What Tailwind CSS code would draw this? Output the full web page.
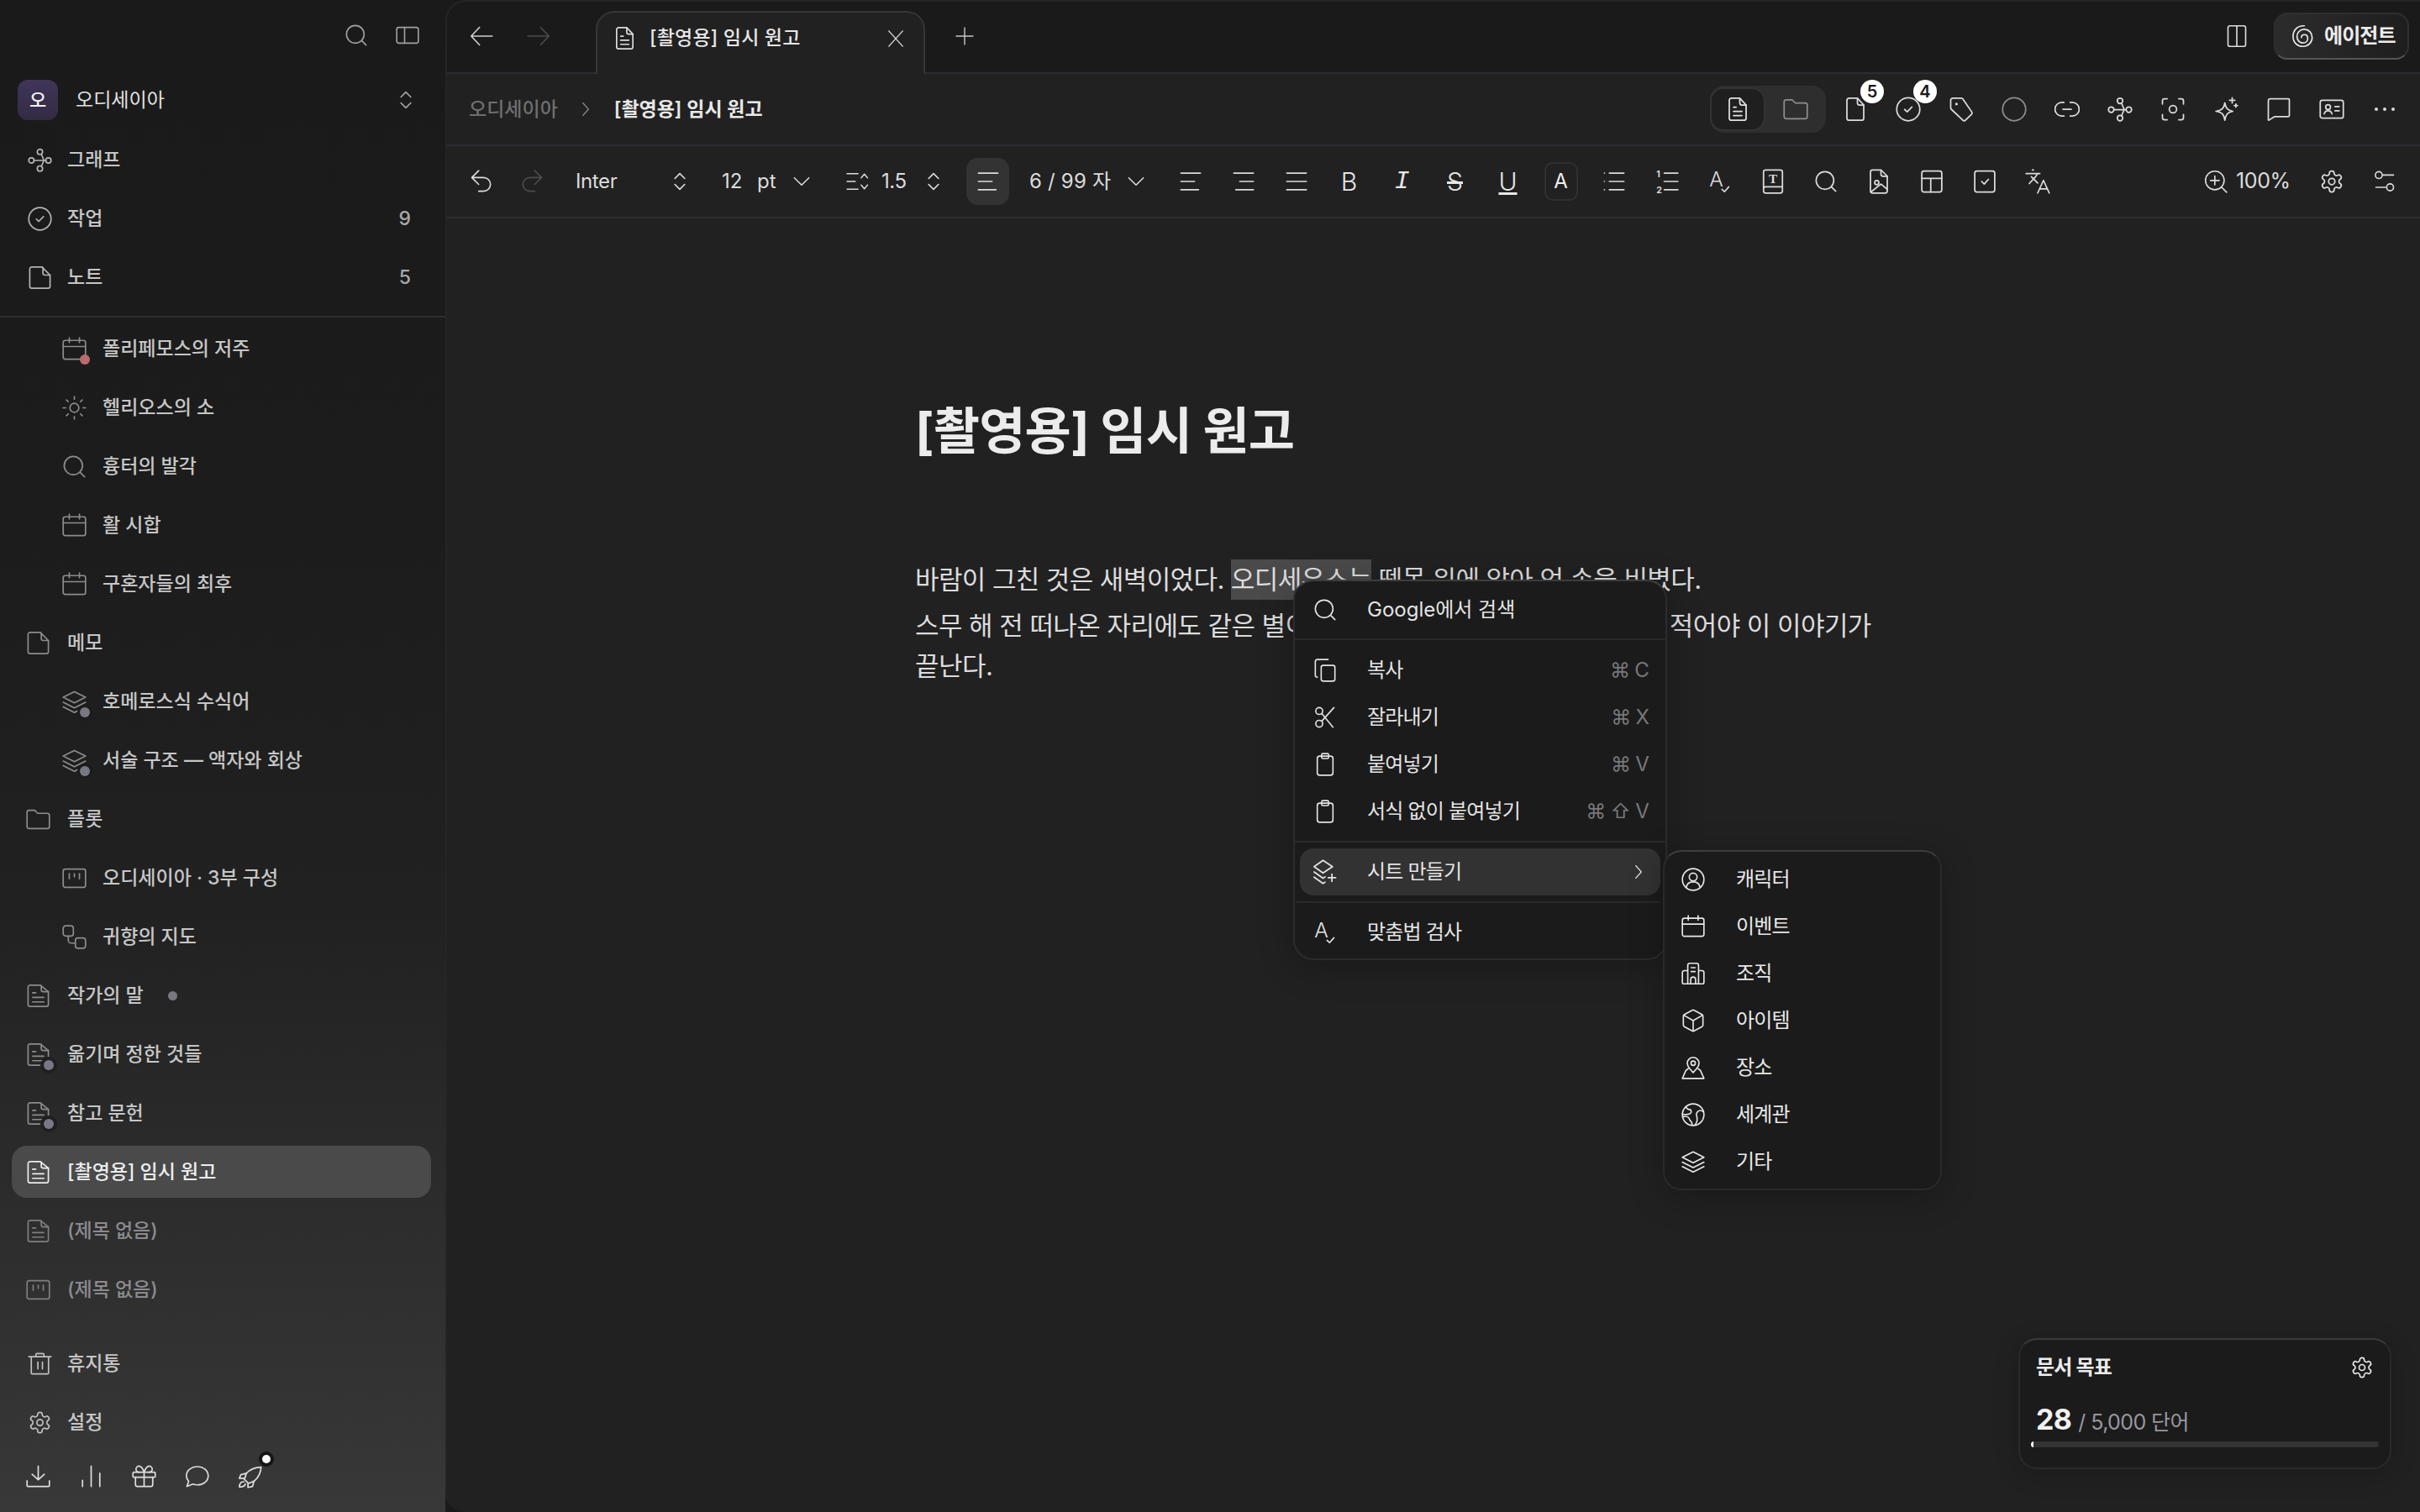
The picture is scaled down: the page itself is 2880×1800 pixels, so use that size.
<!DOCTYPE html>
<html lang="ko">
<head>
<meta charset="UTF-8">
<title>[촬영용] 임시 원고</title>
<script src="https://cdn.jsdelivr.net/npm/@tailwindcss/browser@4"></script>
</head>
<body class="bg-[#1a1a1a] font-['Inter','Noto_Sans_CJK_KR',sans-serif] [&_svg]:fill-none [&_svg]:stroke-current [&_svg]:stroke-[1.4] [&_svg]:shrink-0 [&_svg]:[stroke-linecap:round] [&_svg]:[stroke-linejoin:round]">
<!-- icon set -->
<svg class="hidden">
  <symbol id="search" viewBox="0 0 24 24"><circle cx="11" cy="11" r="9"/><path d="m22 22-4.500-4.500"/></symbol>
  <symbol id="panel" viewBox="0 0 24 24"><rect x="1" y="4" width="22" height="16" rx="2"/><path d="M9 4v16"/></symbol>
  <symbol id="updown" viewBox="0 0 24 24"><path d="m7 9 5-5 5 5M7 15l5 5 5-5"/></symbol>
  <symbol id="graph" viewBox="0 0 24 24"><circle cx="12" cy="4" r="2.600"/><circle cx="3.600" cy="12.400" r="2.600"/><circle cx="20.400" cy="12.400" r="2.600"/><circle cx="12" cy="20.400" r="2.600"/><path d="M6.200 12.400h11.600M13.400 6.200l2.600 6.200-2.600 5.800"/></symbol>
  <symbol id="check" viewBox="0 0 24 24"><circle cx="12" cy="12" r="11"/><path d="m8.500 12.200 2.400 2.300 4.600-4.600"/></symbol>
  <symbol id="file" viewBox="0 0 24 24"><path d="M14 1.500H4a2 2 0 0 0-2 2v17a2 2 0 0 0 2 2h16a2 2 0 0 0 2-2V9.500z"/><path d="M15 2v5.500a2 2 0 0 0 2 2h5"/></symbol>
  <symbol id="filetext" viewBox="0 0 24 24"><path d="M14 1.500H4a2 2 0 0 0-2 2v17a2 2 0 0 0 2 2h16a2 2 0 0 0 2-2V8z"/><path d="M15 2v4a2 2 0 0 0 2 2h5M6.500 9h3M6.500 13.500h11M6.500 18h11"/></symbol>
  <symbol id="doc" viewBox="0 0 24 24"><path d="M14 1.500H6a2 2 0 0 0-2 2v17a2 2 0 0 0 2 2h12a2 2 0 0 0 2-2V8z"/><path d="M14 2v4a2 2 0 0 0 2 2h4M8 10h2.500M8 14h8M8 18h8"/></symbol>
  <symbol id="blank" viewBox="0 0 24 24"><path d="M14 1.500H6a2 2 0 0 0-2 2v17a2 2 0 0 0 2 2h12a2 2 0 0 0 2-2V8z"/><path d="M14 2v4a2 2 0 0 0 2 2h4"/></symbol>
  <symbol id="calendar" viewBox="0 0 24 24"><rect x="1" y="3.500" width="22" height="18.500" rx="2"/><path d="M1 9.500h22M7 1v4.500M17 1v4.500"/></symbol>
  <symbol id="sun" viewBox="0 0 24 24"><circle cx="12" cy="12" r="4.400"/><path d="M12 1v2.500M12 20.500V23M1 12h2.500M20.500 12H23M4.200 4.200 6 6M18 18l1.800 1.800M4.200 19.800 6 18M18 6l1.800-1.800"/></symbol>
  <symbol id="folder" viewBox="0 0 24 24"><path d="M1 5a2 2 0 0 1 2-2h5.500l3 3H21a2 2 0 0 1 2 2v11a2 2 0 0 1-2 2H3a2 2 0 0 1-2-2z"/></symbol>
  <symbol id="layers" viewBox="0 0 24 24"><path d="m12 2 11 5.500L12 13 1 7.500zM1 12.500 12 18l11-5.500M1 17l11 5.500L23 17"/></symbol>
  <symbol id="kanban" viewBox="0 0 24 24"><rect x="1" y="3" width="22" height="18" rx="2"/><path d="M7 7.500v5M12 7.500v3M17 7.500v5"/></symbol>
  <symbol id="flow" viewBox="0 0 24 24"><rect x="1" y="1" width="10" height="10" rx="2.500"/><rect x="13" y="13" width="10" height="10" rx="2.500"/><path d="M6 11v4a3 3 0 0 0 3 3h4"/></symbol>
  <symbol id="trash" viewBox="0 0 24 24"><path d="M1 5h22M8 5V3a1 1 0 0 1 1-1h6a1 1 0 0 1 1 1v2M3.500 5v16a1 1 0 0 0 1 1h15a1 1 0 0 0 1-1V5M10 10.500v6.500M14.500 10.500v6.500"/></symbol>
  <symbol id="gear" viewBox="0 0 24 24"><path d="M12.220 2h-.44a2 2 0 0 0-2 2v.18a2 2 0 0 1-1 1.730l-.43.25a2 2 0 0 1-2 0l-.15-.08a2 2 0 0 0-2.730.73l-.22.38a2 2 0 0 0 .73 2.730l.15.1a2 2 0 0 1 1 1.720v.51a2 2 0 0 1-1 1.740l-.15.09a2 2 0 0 0-.73 2.730l.22.38a2 2 0 0 0 2.730.73l.15-.08a2 2 0 0 1 2 0l.43.25a2 2 0 0 1 1 1.730V20a2 2 0 0 0 2 2h.44a2 2 0 0 0 2-2v-.18a2 2 0 0 1 1-1.730l.43-.25a2 2 0 0 1 2 0l.15.08a2 2 0 0 0 2.730-.73l.22-.39a2 2 0 0 0-.73-2.730l-.15-.08a2 2 0 0 1-1-1.740v-.5a2 2 0 0 1 1-1.740l.15-.09a2 2 0 0 0 .73-2.730l-.22-.38a2 2 0 0 0-2.730-.73l-.15.08a2 2 0 0 1-2 0l-.43-.25a2 2 0 0 1-1-1.730V4a2 2 0 0 0-2-2z"/><circle cx="12" cy="12" r="3"/></symbol>
  <symbol id="download" viewBox="0 0 24 24"><path d="M12 2v13M6 10l6 5.500 6-5.500M1 16.500V21a1 1 0 0 0 1 1h20a1 1 0 0 0 1-1v-4.500"/></symbol>
  <symbol id="bars" viewBox="0 0 24 24"><path d="M3.500 22v-6M12 22V2M20.500 22V9"/></symbol>
  <symbol id="gift" viewBox="0 0 24 24"><rect x="1" y="8" width="22" height="5" rx="1"/><path d="M12 8v14M3.500 13v7a2 2 0 0 0 2 2h13a2 2 0 0 0 2-2v-7M7 8a3 3 0 0 1 0-6c3 0 5 6 5 6s2-6 5-6a3 3 0 0 1 0 6"/></symbol>
  <symbol id="chat" viewBox="0 0 24 24"><path d="M23 11.500c0 5-4.700 9-10.500 9a12 12 0 0 1-4.500-.9L2 22l1.800-5A8.500 8.500 0 0 1 1.500 11.500c0-5 4.800-9 10.800-9S23 6.500 23 11.500z"/></symbol>
  <symbol id="rocket" viewBox="0 0 24 24"><path d="M23 3c-6 .2-11 2.200-14.500 6L6.500 15l4 4 6-2.500C20.500 13 22.500 8.500 23 3zM8.500 9 3 10.500 1.500 14h5M16 16.500 14.500 22 10 23v-4.500M6 17.500c-2-.5-4 .5-4.500 5 3.500.2 5.500-1 6-3"/></symbol>
  <symbol id="left" viewBox="0 0 24 24"><path d="M23 12H2M10 3l-8.500 9 8.500 9"/></symbol>
  <symbol id="right" viewBox="0 0 24 24"><path d="M1 12h21M14 3l8.500 9-8.500 9"/></symbol>
  <symbol id="x" viewBox="0 0 24 24"><path d="M3 2l18 20M21 2 3 22"/></symbol>
  <symbol id="plus" viewBox="0 0 24 24"><path d="M12 2v20M2 12h20"/></symbol>
  <symbol id="chevr" viewBox="0 0 24 24"><path d="m8 3 8 9-8 9"/></symbol>
  <symbol id="chevd" viewBox="0 0 24 24"><path d="m4 8 8 8 8-8"/></symbol>
  <symbol id="split" viewBox="0 0 24 24"><rect x="3" y="1.500" width="18" height="21" rx="2"/><path d="M12 1.500v21"/></symbol>
  <symbol id="spiral" viewBox="0 0 24 24"><path d="M14 1.500C7 1 2.500 6 2.500 12.500c0 6 4.500 10 10 10 5.500 0 9.500-4 9.500-9 0-5-3.500-8.500-8-8.500s-7.500 3.500-7.500 7.500c0 4 3 6.500 6 6.500s5-2 5-4.500-1.500-4-3.500-4-3 1.500-3 3"/></symbol>
  <symbol id="tag" viewBox="0 0 24 24"><path d="M4 1.500h8a2 2 0 0 1 1.500.7l8.500 12.300a2 2 0 0 1 0 2.200L16 22.500a1.500 1.500 0 0 1-2.400 0L2.500 12a2 2 0 0 1-.5-1.300V3.500a2 2 0 0 1 2-2z"/><circle cx="7.500" cy="7" r=".6"/></symbol>
  <symbol id="circle" viewBox="0 0 24 24"><circle cx="12" cy="12" r="11"/></symbol>
  <symbol id="link" viewBox="0 0 24 24"><path d="M9 5.500H7a6.500 6.500 0 0 0 0 13h2M15 5.500h2a6.500 6.500 0 0 1 0 13h-2M8 12h8"/></symbol>
  <symbol id="focus" viewBox="0 0 24 24"><path d="M2 7V4a2 2 0 0 1 2-2h2.500M17.500 2H20a2 2 0 0 1 2 2v3M22 17v3a2 2 0 0 1-2 2h-2.500M6.500 22H4a2 2 0 0 1-2-2v-3"/><circle cx="12" cy="12" r="3.500"/></symbol>
  <symbol id="sparkle" viewBox="0 0 24 24"><path d="M11 6c.8 5 2.500 7 7.500 8-5 1-6.700 3-7.500 8.500C10.200 17 8.500 15 2.500 14 8.500 13 10.200 11 11 6zM18 1v5M15.500 3.500h5M21.500 7v3M20 8.500h3"/></symbol>
  <symbol id="comment" viewBox="0 0 24 24"><path d="M4 2h17a1 1 0 0 1 1 1v15a1 1 0 0 1-1 1H8l-5.500 3.500a.4.4 0 0 1-.5-.4V4a2 2 0 0 1 2-2z"/></symbol>
  <symbol id="idcard" viewBox="0 0 24 24"><rect x="1" y="3.500" width="22" height="17" rx="2"/><circle cx="8.500" cy="10" r="2.300"/><path d="M4.800 16.500c.5-2 2-3 3.700-3s3.200 1 3.700 3M15 9.500h4M15 13.500h4"/></symbol>
  <symbol id="undo" viewBox="0 0 24 24"><path d="M10 15 3 8l7-7M3 8h12a6.500 6.500 0 0 1 0 14h-5"/></symbol>
  <symbol id="redo" viewBox="0 0 24 24"><path d="m14 15 7-7-7-7M21 8H9a6.500 6.500 0 0 0 0 14h5"/></symbol>
  <symbol id="linegap" viewBox="0 0 24 24"><path d="M1 3.500h12M1 12h9M1 20.500h12M16.500 8l3.500-4 3.500 4M16.500 16l3.500 4 3.500-4"/></symbol>
  <symbol id="alignl" viewBox="0 0 24 24"><path d="M2 3.500h20M2 12h14M2 20.500h18"/></symbol>
  <symbol id="alignr" viewBox="0 0 24 24"><path d="M2 3.500h20M8 12h14M4 20.500h18"/></symbol>
  <symbol id="alignj" viewBox="0 0 24 24"><path d="M2 3.500h20M2 12h20M2 20.500h20"/></symbol>
  <symbol id="list" viewBox="0 0 24 24"><path d="M7 3.500h15M7 12h15M7 20.500h15M2 3.500h.1M2 12h.1M2 20.500h.1"/></symbol>
  <symbol id="olist" viewBox="0 0 24 24"><path d="M9 3.500h14M9 12h14M9 20.500h14"/><text x="1" y="8" font-size="9" fill="currentColor" stroke="none" font-weight="700">1</text><text x="1" y="24" font-size="9" fill="currentColor" stroke="none" font-weight="700">2</text></symbol>
  <symbol id="spell" viewBox="0 0 24 24"><text x="1" y="17.500" font-size="21" fill="currentColor" stroke="none" font-weight="300">A</text><path d="m14 20 2.500 2.500 4.500-5"/></symbol>
  <symbol id="book" viewBox="0 0 24 24"><path d="M5 1h14a2 2 0 0 1 2 2v18a2 2 0 0 1-2 2H5a2 2 0 0 1-2-2V3a2 2 0 0 1 2-2zM3 19a2 2 0 0 1 2-2h16"/><text x="12" y="13.500" text-anchor="middle" font-size="12" fill="currentColor" stroke="none" font-weight="700" font-family="Liberation Serif">T</text></symbol>
  <symbol id="fileimg" viewBox="0 0 24 24"><path d="M14 1H6a2 2 0 0 0-2 2v18a2 2 0 0 0 2 2h12a2 2 0 0 0 2-2V7z"/><path d="M14 1.500V5a2 2 0 0 0 2 2h4"/><circle cx="10" cy="13" r="2"/><path d="m4.500 22 9.500-7.500 6 5"/></symbol>
  <symbol id="table" viewBox="0 0 24 24"><rect x="2.500" y="2" width="19" height="20" rx="2"/><path d="M2.500 9h19M11 9v13"/></symbol>
  <symbol id="checkbox" viewBox="0 0 24 24"><rect x="2.500" y="2" width="19" height="20" rx="2"/><path d="m9 12 2.500 2.500 4-4.500"/></symbol>
  <symbol id="translate" viewBox="0 0 24 24"><path d="m6 7.500 6 6M4 14l6-6.500 2-3M1 4.500h13M7 1h1M23 23 17.500 11 12 23M13.800 19h7.500"/></symbol>
  <symbol id="zoomin" viewBox="0 0 24 24"><circle cx="11" cy="11" r="9.500"/><path d="m23 23-5-5M11 6.500v9M6.500 11h9"/></symbol>
  <symbol id="sliders" viewBox="0 0 24 24"><circle cx="6" cy="5.500" r="3.500"/><path d="M10 5.500h11M3 18h10"/><circle cx="17.500" cy="18" r="3.500"/></symbol>
  <symbol id="copy" viewBox="0 0 24 24"><rect x="8" y="7" width="14" height="16" rx="2"/><path d="M4 19a2 2 0 0 1-2-2V3a2 2 0 0 1 2-2h11"/></symbol>
  <symbol id="scissors" viewBox="0 0 24 24"><circle cx="6" cy="5.500" r="3.500"/><circle cx="6" cy="18.500" r="3.500"/><path d="M8.500 8 20 22M21 2 8.500 16"/></symbol>
  <symbol id="clipboard" viewBox="0 0 24 24"><rect x="4" y="3.500" width="16" height="19.500" rx="2.500"/><rect x="8.500" y="1" width="7" height="5" rx="1"/></symbol>
  <symbol id="sheetadd" viewBox="0 0 24 24"><path d="m10 1 9 6-9 6-8.500-6zM1.500 12l8.500 6 2-1.300M1.500 17l8.500 6 2-1.300M18.500 14v7M15 17.500h7"/></symbol>
  <symbol id="user" viewBox="0 0 24 24"><circle cx="12" cy="12" r="11"/><circle cx="12" cy="9.500" r="4"/><path d="M5 20c.5-3 3-5.500 7-5.500s6.500 2.500 7 5.500"/></symbol>
  <symbol id="building" viewBox="0 0 24 24"><path d="M6.500 22.500V3.500a2 2 0 0 1 2-2h7a2 2 0 0 1 2 2v19M6.500 9H3a2 2 0 0 0-2 2v10a1.500 1.500 0 0 0 1.500 1.500h19A1.500 1.500 0 0 0 23 21V11a2 2 0 0 0-2-2h-3.500M10 6h4M10 10h4M9.500 22.500V18a2.500 2.500 0 0 1 5 0v4.500"/></symbol>
  <symbol id="box" viewBox="0 0 24 24"><path d="M22 7.500a2 2 0 0 0-1-1.700L13 1.500a2 2 0 0 0-2 0L3 5.800a2 2 0 0 0-1 1.700v9a2 2 0 0 0 1 1.700l8 4.300a2 2 0 0 0 2 0l8-4.300a2 2 0 0 0 1-1.700zM2.500 6.500 12 12l9.500-5.500M12 23V12"/></symbol>
  <symbol id="place" viewBox="0 0 24 24"><path d="M12 17c-3-3-6-6-6-9.500a6 6 0 0 1 12 0C18 11 15 14 12 17z"/><circle cx="12" cy="7.500" r="2.200"/><path d="M7 13 4.500 15 1 23h22l-3.500-8L17 13"/></symbol>
  <symbol id="globe" viewBox="0 0 24 24"><circle cx="12" cy="12" r="11"/><path d="M4.500 4c1 2 3 3 5 3 1 2 .5 4-2 4.500-2 .5-4 .2-6.500 0M22.500 9c-2-1.500-4.500-1.500-6 0-1 1.500-2 2-1 4 .5 1.500 1 3 .5 5 0 1.500-1 3-2 4.500M1.800 14c2-.5 4-.5 5.500 1 1 1 .8 3 2.700 4 .8 1 1 2 1 3.500"/></symbol>
</svg>

<div class="relative flex w-[2880px] h-[1800px] overflow-hidden">
  <!-- sidebar -->
  <aside class="w-[530px] h-full shrink-0 flex flex-col bg-[linear-gradient(180deg,#1a1a1a_0%,#1c1c1c_35%,#212121_60%,#383838_100%)] text-[23px] font-medium text-[#c6c6c6]">
    <div class="flex items-center justify-end h-[84px] gap-[33px] pr-[31px] text-[#a0a0a0]">
      <svg viewBox="0 0 24 24" class="size-[28px]"><use href="#search"/></svg>
      <svg viewBox="0 0 24 24" class="size-[28px]"><use href="#panel"/></svg>
    </div>
    <div class="flex items-center h-[70px] pl-[21px] pr-[33px]">
      <span class="flex items-center justify-center size-[48px] rounded-[12px] bg-[linear-gradient(180deg,#403558,#322b44)] text-[22px] text-[#f0f0f0]">오</span>
      <span class="ml-[21px] font-normal text-[#e2e2e2]">오디세이아</span>
      <svg viewBox="0 0 24 24" class="ml-auto size-[28px] text-[#a8a8a8]"><use href="#updown"/></svg>
    </div>
    <nav class="mt-[5px] h-[210px] pl-[14px] pr-[17px]">
      <a class="flex items-center h-[62px] mb-2 pl-[19px] gap-[18px]"><svg viewBox="0 0 24 24" class="size-[29px] text-[#b5b5b5]"><use href="#graph"/></svg>그래프</a>
      <a class="flex items-center h-[62px] mb-2 pl-[19px] gap-[18px]"><svg viewBox="0 0 24 24" class="size-[29px] text-[#b5b5b5]"><use href="#check"/></svg>작업<span class="ml-auto mr-[24px] text-[#a8a8a8]">9</span></a>
      <a class="flex items-center h-[62px] mb-2 pl-[19px] gap-[18px]"><svg viewBox="0 0 24 24" class="size-[29px] text-[#b5b5b5]"><use href="#file"/></svg>노트<span class="ml-auto mr-[24px] text-[#a8a8a8]">5</span></a>
    </nav>
    <div class="mt-[7px] border-t-2 border-[#2e2e2e] pt-[6px] pl-[14px] pr-[17px] h-[1216px]">
      <a class="flex items-center h-[62px] mb-2 pl-[60px] gap-[19px]"><span class="relative size-[29px]"><svg viewBox="0 0 24 24" class="size-[29px] text-[#8c8c8c]"><use href="#calendar"/></svg><i class="absolute -right-[4px] -bottom-[4px] size-[12px] rounded-full bg-[#bd6a6f]"></i></span>폴리페모스의 저주</a>
      <a class="flex items-center h-[62px] mb-2 pl-[60px] gap-[19px]"><svg viewBox="0 0 24 24" class="size-[29px] text-[#8c8c8c]"><use href="#sun"/></svg>헬리오스의 소</a>
      <a class="flex items-center h-[62px] mb-2 pl-[60px] gap-[19px]"><svg viewBox="0 0 24 24" class="size-[29px] text-[#8c8c8c]"><use href="#search"/></svg>흉터의 발각</a>
      <a class="flex items-center h-[62px] mb-2 pl-[60px] gap-[19px]"><svg viewBox="0 0 24 24" class="size-[29px] text-[#8c8c8c]"><use href="#calendar"/></svg>활 시합</a>
      <a class="flex items-center h-[62px] mb-2 pl-[60px] gap-[19px]"><svg viewBox="0 0 24 24" class="size-[29px] text-[#8c8c8c]"><use href="#calendar"/></svg>구혼자들의 최후</a>
      <a class="flex items-center h-[62px] mb-2 pl-[17px] gap-[20px]"><svg viewBox="0 0 24 24" class="size-[29px] text-[#8c8c8c]"><use href="#file"/></svg>메모</a>
      <a class="flex items-center h-[62px] mb-2 pl-[60px] gap-[19px]"><span class="relative size-[29px]"><svg viewBox="0 0 24 24" class="size-[29px] text-[#8c8c8c]"><use href="#layers"/></svg><i class="absolute -right-[4px] -bottom-[4px] size-[12px] rounded-full bg-[#777883] ring-[3px] ring-[#1c1c1c]"></i></span>호메로스식 수식어</a>
      <a class="flex items-center h-[62px] mb-2 pl-[60px] gap-[19px]"><span class="relative size-[29px]"><svg viewBox="0 0 24 24" class="size-[29px] text-[#8c8c8c]"><use href="#layers"/></svg><i class="absolute -right-[4px] -bottom-[4px] size-[12px] rounded-full bg-[#777883] ring-[3px] ring-[#1c1c1c]"></i></span>서술 구조 — 액자와 회상</a>
      <a class="flex items-center h-[62px] mb-2 pl-[17px] gap-[20px]"><svg viewBox="0 0 24 24" class="size-[29px] text-[#8c8c8c]"><use href="#folder"/></svg>플롯</a>
      <a class="flex items-center h-[62px] mb-2 pl-[60px] gap-[19px]"><svg viewBox="0 0 24 24" class="size-[29px] text-[#8c8c8c]"><use href="#kanban"/></svg>오디세이아 · 3부 구성</a>
      <a class="flex items-center h-[62px] mb-2 pl-[60px] gap-[19px]"><svg viewBox="0 0 24 24" class="size-[29px] text-[#8c8c8c]"><use href="#flow"/></svg>귀향의 지도</a>
      <a class="flex items-center h-[62px] mb-2 pl-[17px] gap-[20px]"><svg viewBox="0 0 24 24" class="size-[29px] text-[#8c8c8c]"><use href="#filetext"/></svg>작가의 말<i class="ml-[9px] size-[11px] rounded-full bg-[#777883]"></i></a>
      <a class="flex items-center h-[62px] mb-2 pl-[17px] gap-[20px]"><span class="relative size-[29px]"><svg viewBox="0 0 24 24" class="size-[29px] text-[#8c8c8c]"><use href="#filetext"/></svg><i class="absolute -right-[4px] -bottom-[4px] size-[12px] rounded-full bg-[#777883] ring-[4px] ring-[#1f1f1f]"></i></span>옮기며 정한 것들</a>
      <a class="flex items-center h-[62px] mb-2 pl-[17px] gap-[20px]"><span class="relative size-[29px]"><svg viewBox="0 0 24 24" class="size-[29px] text-[#8c8c8c]"><use href="#filetext"/></svg><i class="absolute -right-[4px] -bottom-[4px] size-[12px] rounded-full bg-[#777883] ring-[4px] ring-[#1f1f1f]"></i></span>참고 문헌</a>
      <a class="flex items-center h-[62px] mb-2 pl-[17px] gap-[20px] rounded-[18px] bg-[#4a4a4a] text-[#ededed]"><svg viewBox="0 0 24 24" class="size-[29px] text-[#ededed]"><use href="#filetext"/></svg>[촬영용] 임시 원고</a>
      <a class="flex items-center h-[62px] mb-2 pl-[17px] gap-[20px] text-[#8b8b8f]"><svg viewBox="0 0 24 24" class="size-[29px] text-[#7f7f7f]"><use href="#filetext"/></svg>(제목 없음)</a>
      <a class="flex items-center h-[62px] mb-2 pl-[17px] gap-[20px] text-[#8b8b8f]"><svg viewBox="0 0 24 24" class="size-[29px] text-[#7f7f7f]"><use href="#kanban"/></svg>(제목 없음)</a>
    </div>
    <div class="pl-[14px] pr-[17px]">
      <a class="flex items-center h-[62px] mb-2 pl-[19px] gap-[18px]"><svg viewBox="0 0 24 24" class="size-[29px] text-[#c0c0c0]"><use href="#trash"/></svg>휴지통</a>
      <a class="flex items-center h-[62px] mb-2 pl-[19px] gap-[18px]"><svg viewBox="0 0 24 24" class="size-[29px] text-[#c0c0c0]"><use href="#gear"/></svg>설정</a>
      <div class="flex items-center gap-[34px] pl-[17px] pt-[11px] text-[#dedede]">
        <svg viewBox="0 0 24 24" class="size-[29px]"><use href="#download"/></svg>
        <svg viewBox="0 0 24 24" class="size-[29px]"><use href="#bars"/></svg>
        <svg viewBox="0 0 24 24" class="size-[29px]"><use href="#gift"/></svg>
        <svg viewBox="0 0 24 24" class="size-[29px]"><use href="#chat"/></svg>
        <span class="relative size-[29px]"><svg viewBox="0 0 24 24" class="size-[29px]"><use href="#rocket"/></svg><i class="absolute -right-[10px] -top-[11px] size-[10px] rounded-full bg-white ring-[4px] ring-[#161616]"></i></span>
      </div>
    </div>
  </aside>

  <!-- main -->
  <main class="flex-1 flex flex-col min-w-0 bg-[#212121] rounded-l-[24px] border-l-2 border-t-2 border-[#252525] overflow-hidden text-[#d9d9d9]">
    <!-- tab bar -->
    <div class="relative flex items-center h-[86px] pb-[3px] shrink-0 bg-[#1a1a1a] border-b-2 border-[#2d2d32] pl-[8px] pr-[13px]">
      <span class="flex justify-center w-[66px] text-[#d0d0d0]"><svg viewBox="0 0 24 24" class="size-[28px]"><use href="#left"/></svg></span>
      <span class="flex justify-center ml-[4px] w-[62px] text-[#4c4c4c]"><svg viewBox="0 0 24 24" class="size-[28px]"><use href="#right"/></svg></span>
      <div class="relative self-end flex items-center h-[75px] w-[392px] ml-[37px] -mb-[5px] pl-[18px] pr-[22px] pb-[12px] bg-[#212121] rounded-t-[22px] border-t-2 border-x-2 border-[#36363a] border-b-0 text-[23px] font-medium tracking-[0.2px] text-[#e6e6e6]">
        <svg viewBox="0 0 24 24" class="size-[29px] text-[#dcdcdc]"><use href="#doc"/></svg>
        <span class="ml-[15px]">[촬영용] 임시 원고</span>
        <svg viewBox="0 0 24 24" class="ml-auto size-[22px] text-[#e0e0e0]"><use href="#x"/></svg>
      </div>
      <span class="flex justify-center w-[42px] ml-[26px] text-[#c8c8c8]"><svg viewBox="0 0 24 24" class="size-[24px]"><use href="#plus"/></svg></span>
      <svg viewBox="0 0 24 24" class="ml-auto size-[28px] text-[#dcdcdc]"><use href="#split"/></svg>
      <div class="flex items-center gap-[12px] ml-[30px] w-[161px] h-[56px] pl-[18px] rounded-[16px] border-2 border-[#2f2f2f] border-b-[#555] bg-[linear-gradient(90deg,#2c2c2c,#1e1e1e)] text-[24px] font-bold tracking-[-0.9px] text-[#ececec]">
        <svg viewBox="0 0 24 24" class="size-[28px]"><use href="#spiral"/></svg>에이전트
      </div>
    </div>
    <!-- breadcrumb + note tools -->
    <div class="flex items-center h-[86px] shrink-0 border-b-2 border-[#2d2d32] pl-[26px] pr-[11px] text-[23px]">
      <span class="text-[#6f6f6f] font-medium">오디세이아</span>
      <svg viewBox="0 0 24 24" class="ml-[23px] mr-[24px] size-[20px] text-[#8a8a8a]"><use href="#chevr"/></svg>
      <span class="font-semibold text-[#e8e8e8]">[촬영용] 임시 원고</span>
      <div class="ml-auto flex items-center w-[138px] h-[56px] rounded-[16px] bg-[#2e2e2e]">
        <span class="flex items-center justify-center w-[66px] h-[52px] rounded-[16px] bg-[#1f1f1f] border-2 border-[#333] text-[#e2e2e2]"><svg viewBox="0 0 24 24" class="size-[30px]"><use href="#doc"/></svg></span>
        <span class="flex justify-center flex-1 text-[#8e8e8e]"><svg viewBox="0 0 24 24" class="size-[30px]"><use href="#folder"/></svg></span>
      </div>
      <div class="flex items-center text-[#dcdcdc] ml-[3px]">
        <span class="relative flex justify-center w-[63px]"><svg viewBox="0 0 24 24" class="size-[30px]"><use href="#blank"/></svg><b class="absolute left-[38px] -top-[20px] flex items-center justify-center size-[28px] rounded-full bg-white text-[#1a1a1a] text-[20px] font-semibold">5</b></span>
        <span class="relative flex justify-center w-[63px]"><svg viewBox="0 0 24 24" class="size-[30px]"><use href="#check"/></svg><b class="absolute left-[38px] -top-[20px] flex items-center justify-center size-[28px] rounded-full bg-white text-[#1a1a1a] text-[20px] font-semibold">4</b></span>
        <span class="flex justify-center w-[63px]"><svg viewBox="0 0 24 24" class="size-[30px]"><use href="#tag"/></svg></span>
        <span class="flex justify-center w-[63px] text-[#8f8f8f]"><svg viewBox="0 0 24 24" class="size-[30px]"><use href="#circle"/></svg></span>
        <span class="flex justify-center w-[63px]"><svg viewBox="0 0 24 24" class="size-[30px]"><use href="#link"/></svg></span>
        <span class="flex justify-center w-[63px]"><svg viewBox="0 0 24 24" class="size-[30px]"><use href="#graph"/></svg></span>
        <span class="flex justify-center w-[63px]"><svg viewBox="0 0 24 24" class="size-[30px]"><use href="#focus"/></svg></span>
        <span class="flex justify-center w-[63px]"><svg viewBox="0 0 24 24" class="size-[30px]"><use href="#sparkle"/></svg></span>
        <span class="flex justify-center w-[63px]"><svg viewBox="0 0 24 24" class="size-[30px]"><use href="#comment"/></svg></span>
        <span class="flex justify-center w-[63px]"><svg viewBox="0 0 24 24" class="size-[30px]"><use href="#idcard"/></svg></span>
        <span class="flex justify-center gap-[6px] w-[63px]"><i class="size-[4px] rounded-full bg-[#dcdcdc]"></i><i class="size-[4px] rounded-full bg-[#dcdcdc]"></i><i class="size-[4px] rounded-full bg-[#dcdcdc]"></i></span>
      </div>
    </div>
    <!-- format toolbar -->
    <div class="flex items-center h-[86px] shrink-0 border-b-2 border-[#2d2d32] pl-[9px] pr-[11px] text-[24px] text-[#dcdcdc]">
      <span class="flex justify-center w-[62px]"><svg viewBox="0 0 24 24" class="size-[28px]"><use href="#undo"/></svg></span>
      <span class="flex justify-center w-[62px] text-[#4c4c4c]"><svg viewBox="0 0 24 24" class="size-[28px]"><use href="#redo"/></svg></span>
      <span class="ml-[20px] w-[110px] tracking-[-0.4px]">Inter</span>
      <svg viewBox="0 0 24 24" class="size-[28px]"><use href="#updown"/></svg>
      <span class="ml-[36px] w-[42px]">12</span>
      <span class="w-[40px]">pt</span>
      <svg viewBox="0 0 24 24" class="size-[26px]"><use href="#chevd"/></svg>
      <svg viewBox="0 0 24 24" class="ml-[40px] size-[26px]"><use href="#linegap"/></svg>
      <span class="ml-[16px] w-[48px] tracking-[-0.4px]">1.5</span>
      <svg viewBox="0 0 24 24" class="size-[28px]"><use href="#updown"/></svg>
      <span class="flex items-center justify-center ml-[25px] w-[51px] h-[56px] rounded-[14px] bg-[#333]"><svg viewBox="0 0 24 24" class="size-[28px]"><use href="#alignl"/></svg></span>
      <span class="ml-[24px] w-[114px] tracking-[0.2px]">6 / 99 자</span>
      <svg viewBox="0 0 24 24" class="size-[26px]"><use href="#chevd"/></svg>
      <span class="flex justify-center ml-[20px] w-[63px]"><svg viewBox="0 0 24 24" class="size-[28px]"><use href="#alignl"/></svg></span>
      <span class="flex justify-center w-[63px]"><svg viewBox="0 0 24 24" class="size-[28px]"><use href="#alignr"/></svg></span>
      <span class="flex justify-center w-[63px]"><svg viewBox="0 0 24 24" class="size-[28px]"><use href="#alignj"/></svg></span>
      <span class="flex justify-center w-[63px] text-[30px] font-light text-[#e6e6e6]">B</span>
      <span class="flex justify-center w-[63px] text-[30px] italic font-['Liberation_Mono'] text-[#e6e6e6]">I</span>
      <span class="flex justify-center w-[63px] text-[30px] font-light line-through text-[#e6e6e6]">S</span>
      <span class="flex justify-center w-[63px] text-[30px] font-light underline text-[#e6e6e6]">U</span>
      <span class="flex justify-center w-[63px]"><span class="flex items-center justify-center w-[40px] h-[46px] rounded-[10px] border-2 border-[#2f2f33] text-[24px] font-normal text-[#eee]">A</span></span>
      <span class="flex justify-center w-[63px]"><svg viewBox="0 0 24 24" class="size-[28px]"><use href="#list"/></svg></span>
      <span class="flex justify-center w-[63px]"><svg viewBox="0 0 24 24" class="size-[28px]"><use href="#olist"/></svg></span>
      <span class="flex justify-center w-[63px]"><svg viewBox="0 0 24 24" class="size-[28px]"><use href="#spell"/></svg></span>
      <span class="flex justify-center w-[63px]"><svg viewBox="0 0 24 24" class="size-[30px]"><use href="#book"/></svg></span>
      <span class="flex justify-center w-[63px]"><svg viewBox="0 0 24 24" class="size-[28px]"><use href="#search"/></svg></span>
      <span class="flex justify-center w-[63px]"><svg viewBox="0 0 24 24" class="size-[30px]"><use href="#fileimg"/></svg></span>
      <span class="flex justify-center w-[63px]"><svg viewBox="0 0 24 24" class="size-[30px]"><use href="#table"/></svg></span>
      <span class="flex justify-center w-[63px]"><svg viewBox="0 0 24 24" class="size-[30px]"><use href="#checkbox"/></svg></span>
      <span class="flex justify-center w-[63px]"><svg viewBox="0 0 24 24" class="size-[30px]"><use href="#translate"/></svg></span>
      <svg viewBox="0 0 24 24" class="ml-auto size-[28px]"><use href="#zoomin"/></svg>
      <span class="ml-[10px] mr-[16px] w-[66px] text-[25px] tracking-[-0.4px]">100%</span>
      <span class="flex justify-center w-[63px]"><svg viewBox="0 0 24 24" class="size-[30px]"><use href="#gear"/></svg></span>
      <span class="flex justify-center w-[63px]"><svg viewBox="0 0 24 24" class="size-[28px]"><use href="#sliders"/></svg></span>
    </div>
    <!-- editor -->
    <article class="flex-1 pl-[557px] pt-[213px]">
      <h1 class="text-[60px] leading-[80px] font-bold tracking-[-0.8px] text-[#ececec]">[촬영용] 임시 원고</h1>
      <p class="mt-[113px] text-[31px] leading-[48px] tracking-[-0.6px] text-[#dcdcdc]">바람이 그친 것은 새벽이었다. <span class="inline-block h-[48px] bg-[#4a4a4a]">오디세우스는</span> 뗏목 위에 앉아 언 손을 비볐다.</p>
      <p class="mt-[7px] w-[1200px] text-[31px] leading-[48px] tracking-[-0.55px] text-[#dcdcdc]">스무 해 전 떠나온 자리에도 같은 별이 떠 있었다. 이 모든 문장을 끝까지 적어야 이 이야기가<br>끝난다.</p>
    </article>
  </main>

  <!-- context menu -->
  <div class="absolute left-[1539px] top-[690px] w-[445px] h-[453px] rounded-[24px] bg-[#1b1b1b] border-2 border-[#2c2c2c] border-t-[#3d3d3d] text-[24px] tracking-[-0.8px] text-[#e4e4e4] shadow-[0_8px_40px_rgba(0,0,0,0.25)]">
    <div class="flex items-center h-[68px] pl-[22px] gap-[36px]"><svg viewBox="0 0 24 24" class="size-[28px]"><use href="#search"/></svg><span class="tracking-normal">Google에서 검색</span></div>
    <div class="border-t-2 border-[#2a2a2e]"></div>
    <div class="pt-[8px]">
      <div class="flex items-center h-[56px] pl-[22px] pr-[20px] gap-[36px]"><svg viewBox="0 0 24 24" class="size-[28px]"><use href="#copy"/></svg>복사<span class="ml-auto text-[#77777b]">⌘ C</span></div>
      <div class="flex items-center h-[56px] pl-[22px] pr-[20px] gap-[36px]"><svg viewBox="0 0 24 24" class="size-[28px]"><use href="#scissors"/></svg>잘라내기<span class="ml-auto text-[#77777b]">⌘ X</span></div>
      <div class="flex items-center h-[56px] pl-[22px] pr-[20px] gap-[36px]"><svg viewBox="0 0 24 24" class="size-[28px]"><use href="#clipboard"/></svg>붙여넣기<span class="ml-auto text-[#77777b]">⌘ V</span></div>
      <div class="flex items-center h-[56px] pl-[22px] pr-[20px] gap-[36px]"><svg viewBox="0 0 24 24" class="size-[28px]"><use href="#clipboard"/></svg>서식 없이 붙여넣기<span class="ml-auto text-[#77777b]">⌘ ⇧ V</span></div>
    </div>
    <div class="mt-[7px] border-t-2 border-[#2a2a2e]"></div>
    <div class="flex items-center h-[56px] mx-[6px] mt-[7px] pl-[15px] pr-[16px] gap-[35px] rounded-[16px] bg-[#323232]"><svg viewBox="0 0 24 24" class="size-[30px]"><use href="#sheetadd"/></svg>시트 만들기<svg viewBox="0 0 24 24" class="ml-auto size-[20px]"><use href="#chevr"/></svg></div>
    <div class="mt-[7px] ml-[2px] mr-[6px] border-t-2 border-[#2a2a2e]"></div>
    <div class="flex items-center h-[70px] pl-[22px] gap-[36px]"><svg viewBox="0 0 24 24" class="size-[28px]"><use href="#spell"/></svg>맞춤법 검사</div>
  </div>

  <!-- sheet submenu -->
  <div class="absolute left-[1979px] top-[1012px] w-[332px] h-[405px] pt-[5px] rounded-[22px] bg-[#1b1b1b] border-2 border-[#2a2a2a] border-t-[#3d3d3d] text-[24px] tracking-[-0.8px] text-[#e8e8e8] shadow-[0_8px_40px_rgba(0,0,0,0.25)]">
    <div class="flex items-center h-[56px] pl-[20px] gap-[37px]"><svg viewBox="0 0 24 24" class="size-[28px]"><use href="#user"/></svg>캐릭터</div>
    <div class="flex items-center h-[56px] pl-[20px] gap-[37px]"><svg viewBox="0 0 24 24" class="size-[28px]"><use href="#calendar"/></svg>이벤트</div>
    <div class="flex items-center h-[56px] pl-[20px] gap-[37px]"><svg viewBox="0 0 24 24" class="size-[28px]"><use href="#building"/></svg>조직</div>
    <div class="flex items-center h-[56px] pl-[20px] gap-[37px]"><svg viewBox="0 0 24 24" class="size-[28px]"><use href="#box"/></svg>아이템</div>
    <div class="flex items-center h-[56px] pl-[20px] gap-[37px]"><svg viewBox="0 0 24 24" class="size-[28px]"><use href="#place"/></svg>장소</div>
    <div class="flex items-center h-[56px] pl-[20px] gap-[37px]"><svg viewBox="0 0 24 24" class="size-[28px]"><use href="#globe"/></svg>세계관</div>
    <div class="flex items-center h-[56px] pl-[20px] gap-[37px]"><svg viewBox="0 0 24 24" class="size-[28px]"><use href="#layers"/></svg>기타</div>
  </div>

  <!-- word goal -->
  <div class="absolute left-[2402px] top-[1593px] w-[444px] h-[156px] rounded-[22px] bg-[#1b1b1b] border-2 border-[#2a2a2a] border-t-[#3a3a3a] px-[13px] shadow-[0_6px_30px_rgba(0,0,0,0.2)]">
    <div class="flex items-center justify-between h-[66px] pl-[6px] pr-[6px] text-[24px] font-semibold tracking-[-0.9px] text-[#ececec]">문서 목표<svg viewBox="0 0 24 24" class="size-[28px]"><use href="#gear"/></svg></div>
    <div class="flex items-baseline gap-[8px] pl-[6px] pt-[3px] h-[50px] text-[25px] tracking-[-0.6px] text-[#98989e]"><b class="text-[34px] font-bold text-[#f0f0f0]">28</b>/ 5,000 단어</div>
    <div class="mt-[5px] h-[7px] rounded-full bg-[#333] overflow-hidden"><div class="h-full w-[3px] bg-white"></div></div>
  </div>
</div>
</body>
</html>
